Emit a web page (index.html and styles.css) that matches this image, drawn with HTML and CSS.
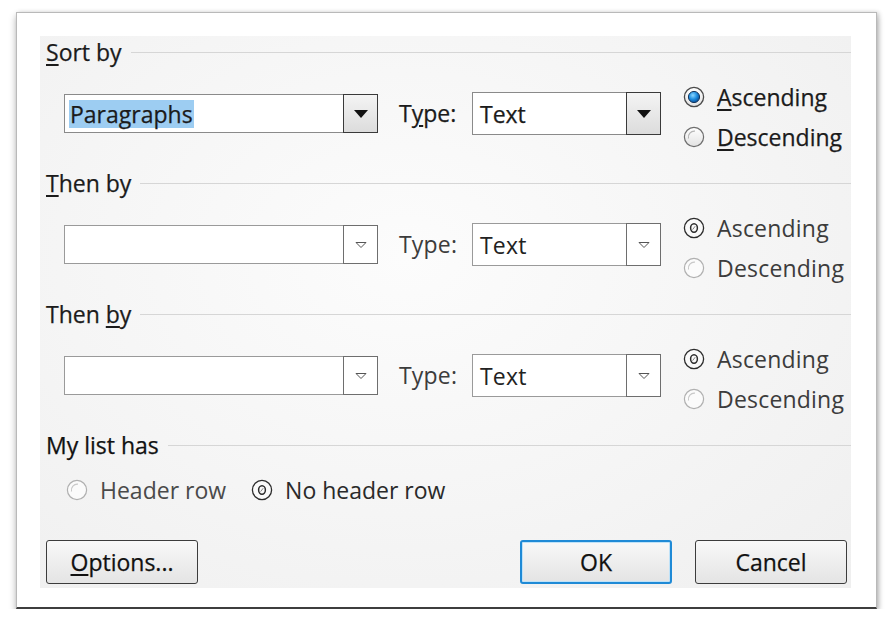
FILE: index.html
```html
<!DOCTYPE html>
<html lang="en">
<head>
<meta charset="utf-8">
<title>Sort Text</title>
<link rel="stylesheet" href="styles.css">
</head>
<body>
<div class="dialog">
  <div class="panel">
    <section class="group">
      <div class="heading"><span class="heading-text"><u>S</u>ort by</span><span class="rule"></span></div>
      <div class="row">
        <div class="combo combo-main">
          <span class="value"><span class="selected">Paragraphs</span></span>
          <span class="drop drop-active"><svg width="16" height="10" viewBox="0 0 16 10"><polygon points="1,1 15,1 8,9" fill="#111"/></svg></span>
        </div>
        <span class="type-label">T<u>y</u>pe:</span>
        <div class="combo combo-type">
          <span class="value">Text</span>
          <span class="drop drop-active"><svg width="16" height="10" viewBox="0 0 16 10"><polygon points="1,1 15,1 8,9" fill="#111"/></svg></span>
        </div>
        <div class="radios">
          <div class="radio">
            <svg class="dot" width="22" height="22" viewBox="0 0 22 22"><defs><radialGradient id="blue" cx="40%" cy="35%" r="65%"><stop offset="0" stop-color="#8ad6ff"/><stop offset="0.55" stop-color="#1f8ee0"/><stop offset="1" stop-color="#0a4f98"/></radialGradient><linearGradient id="ring" x1="0" y1="0" x2="0" y2="1"><stop offset="0" stop-color="#ffffff"/><stop offset="1" stop-color="#e2e2e2"/></linearGradient></defs><circle cx="11" cy="11" r="9.6" fill="url(#ring)" stroke="#4a4a4a" stroke-width="1.3"/><circle cx="11" cy="11" r="5.6" fill="url(#blue)" stroke="#16375e" stroke-width="1"/></svg>
            <span class="label"><u>A</u>scending</span>
          </div>
          <div class="radio">
            <svg class="dot" width="22" height="22" viewBox="0 0 22 22"><circle cx="11" cy="11" r="9.6" fill="url(#ring)" stroke="#6e6e6e" stroke-width="1.2"/><path d="M5.5 12.5 A6 6 0 0 1 12 5.2" fill="none" stroke="#b5b5b5" stroke-width="1.2"/></svg>
            <span class="label"><u>D</u>escending</span>
          </div>
        </div>
      </div>
    </section>

    <section class="group">
      <div class="heading"><span class="heading-text"><u>T</u>hen by</span><span class="rule"></span></div>
      <div class="row dim">
        <div class="combo combo-main combo-plain">
          <span class="value"></span>
          <span class="drop drop-plain"><svg width="12" height="8" viewBox="0 0 12 8"><polygon points="1,1.5 11,1.5 6,6.5" fill="none" stroke="#555" stroke-width="1"/></svg></span>
        </div>
        <span class="type-label">Type:</span>
        <div class="combo combo-type combo-plain">
          <span class="value">Text</span>
          <span class="drop drop-plain"><svg width="12" height="8" viewBox="0 0 12 8"><polygon points="1,1.5 11,1.5 6,6.5" fill="none" stroke="#555" stroke-width="1"/></svg></span>
        </div>
        <div class="radios">
          <div class="radio">
            <svg class="dot" width="22" height="22" viewBox="0 0 22 22"><circle cx="11" cy="11" r="9.6" fill="#fafafa" stroke="#2c2c2c" stroke-width="1.3"/><ellipse cx="11" cy="11" rx="3.4" ry="4.2" fill="none" stroke="#2c2c2c" stroke-width="1.5"/><path d="M9.6 12.6 L12.2 9.2" stroke="#777" stroke-width="0.9"/></svg>
            <span class="label">Ascending</span>
          </div>
          <div class="radio">
            <svg class="dot" width="22" height="22" viewBox="0 0 22 22"><circle cx="11" cy="11" r="9.6" fill="#fbfbfb" stroke="#b0b0b0" stroke-width="1.2"/><path d="M5.5 12.5 A6 6 0 0 1 12 5.2" fill="none" stroke="#c9c9c9" stroke-width="1.2"/></svg>
            <span class="label">Descending</span>
          </div>
        </div>
      </div>
    </section>

    <section class="group">
      <div class="heading"><span class="heading-text">Then <u>b</u>y</span><span class="rule"></span></div>
      <div class="row dim">
        <div class="combo combo-main combo-plain">
          <span class="value"></span>
          <span class="drop drop-plain"><svg width="12" height="8" viewBox="0 0 12 8"><polygon points="1,1.5 11,1.5 6,6.5" fill="none" stroke="#555" stroke-width="1"/></svg></span>
        </div>
        <span class="type-label">Type:</span>
        <div class="combo combo-type combo-plain">
          <span class="value">Text</span>
          <span class="drop drop-plain"><svg width="12" height="8" viewBox="0 0 12 8"><polygon points="1,1.5 11,1.5 6,6.5" fill="none" stroke="#555" stroke-width="1"/></svg></span>
        </div>
        <div class="radios">
          <div class="radio">
            <svg class="dot" width="22" height="22" viewBox="0 0 22 22"><circle cx="11" cy="11" r="9.6" fill="#fafafa" stroke="#2c2c2c" stroke-width="1.3"/><ellipse cx="11" cy="11" rx="3.4" ry="4.2" fill="none" stroke="#2c2c2c" stroke-width="1.5"/><path d="M9.6 12.6 L12.2 9.2" stroke="#777" stroke-width="0.9"/></svg>
            <span class="label">Ascending</span>
          </div>
          <div class="radio">
            <svg class="dot" width="22" height="22" viewBox="0 0 22 22"><circle cx="11" cy="11" r="9.6" fill="#fbfbfb" stroke="#b0b0b0" stroke-width="1.2"/><path d="M5.5 12.5 A6 6 0 0 1 12 5.2" fill="none" stroke="#c9c9c9" stroke-width="1.2"/></svg>
            <span class="label">Descending</span>
          </div>
        </div>
      </div>
    </section>

    <section class="group-last">
      <div class="heading"><span class="heading-text">My list has</span><span class="rule"></span></div>
      <div class="header-row">
        <div class="radio">
          <svg class="dot" width="22" height="22" viewBox="0 0 22 22"><circle cx="11" cy="11" r="9.6" fill="#fbfbfb" stroke="#b0b0b0" stroke-width="1.2"/><path d="M5.5 12.5 A6 6 0 0 1 12 5.2" fill="none" stroke="#c9c9c9" stroke-width="1.2"/></svg>
          <span class="label">Header row</span>
        </div>
        <div class="radio radio-second">
          <svg class="dot" width="22" height="22" viewBox="0 0 22 22"><circle cx="11" cy="11" r="9.6" fill="#fafafa" stroke="#2c2c2c" stroke-width="1.3"/><ellipse cx="11" cy="11" rx="3.4" ry="4.2" fill="none" stroke="#2c2c2c" stroke-width="1.5"/><path d="M9.6 12.6 L12.2 9.2" stroke="#777" stroke-width="0.9"/></svg>
          <span class="label label-dark">No header row</span>
        </div>
      </div>
    </section>

    <div class="buttons">
      <button class="btn"><u>O</u>ptions...</button>
      <span class="spacer"></span>
      <button class="btn btn-default">OK</button>
      <button class="btn btn-cancel">Cancel</button>
    </div>
  </div>
</div>
</body>
</html>
```

FILE: styles.css
```css
html, body {
  margin: 0;
  padding: 0;
  background: #ffffff;
}

body {
  font-family: "Open Sans", "Noto Sans", "DejaVu Sans", sans-serif;
  font-size: 23px;
  color: #1b1b1b;
  -webkit-text-stroke: 0.25px currentColor;
}

u {
  text-decoration: underline;
  text-decoration-thickness: 2px;
  text-underline-offset: 3px;
}

.dialog {
  margin: 12px 0 0 16px;
  width: 813px;
  height: 553px;
  padding: 23px 23px 18px 23px;
  background: #ffffff;
  border: 1px solid #b9b9b9;
  border-bottom: 2px solid #3e3e3e;
  box-shadow: 0 4px 7px rgba(0, 0, 0, 0.3), 2px 0 4px rgba(0, 0, 0, 0.14);
}

.panel {
  width: 811px;
  height: 552px;
  background: radial-gradient(ellipse at 45% 40%, #fcfcfc 0%, #f5f5f5 55%, #efefef 100%);
  display: flex;
  flex-direction: column;
}

.heading {
  height: 32px;
  display: flex;
  align-items: center;
  padding-left: 6px;
}

.heading-text {
  line-height: 32px;
  white-space: nowrap;
}

.rule {
  flex: 1;
  height: 0;
  border-top: 1px solid #d6d6d6;
  margin-left: 9px;
}

.row {
  height: 99px;
  display: flex;
  align-items: flex-start;
  padding-left: 24px;
}

.combo {
  display: flex;
  background: #ffffff;
  border: 1px solid #8a8a8a;
  box-sizing: border-box;
}

.combo-main {
  width: 314px;
  height: 39px;
  margin-top: 26px;
}

.combo-type {
  width: 189px;
  height: 43px;
  margin-top: 24px;
}

.value {
  flex: 1;
  display: flex;
  align-items: center;
  padding-left: 4px;
  white-space: nowrap;
}

.combo-type .value {
  padding-left: 7px;
}

.selected {
  background: #9dcdf2;
  padding: 0 1px;
  line-height: 28px;
}

.drop {
  width: 35px;
  display: flex;
  align-items: center;
  justify-content: center;
  box-sizing: border-box;
}

.drop-active {
  margin: -1px -1px -1px 0;
  border: 1.5px solid #3a3a3a;
  background: linear-gradient(#f4f4f4, #dcdcdc);
}

.drop-plain {
  margin: -1px -1px -1px 0;
  border: 1px solid #6e6e6e;
  background: #ffffff;
}

.type-label {
  width: 73px;
  margin-left: 21px;
  margin-top: 26px;
  line-height: 39px;
  white-space: nowrap;
}

.radios {
  margin-left: 22px;
  margin-top: 9px;
  display: flex;
  flex-direction: column;
}

.radio {
  height: 40px;
  display: flex;
  align-items: center;
  white-space: nowrap;
}

.dot {
  flex: none;
}

.radio .label {
  margin-left: 12px;
}

.dim {
  color: #3c3c3c;
  -webkit-text-stroke: 0;
  letter-spacing: 0.2px;
}

.dim .combo {
  border-color: #9a9a9a;
}

.dim .combo-type .value {
  color: #222;
}

.group-last .heading-text {
  color: #111;
}

.header-row {
  height: 58px;
  display: flex;
  align-items: center;
  padding-left: 26px;
  color: #4a4a4a;
  -webkit-text-stroke: 0;
}

.radio-second {
  margin-left: 25px;
}

.label-dark {
  color: #2a2a2a;
}

.buttons {
  display: flex;
  margin-top: 21px;
  padding: 0 4px 0 6px;
}

.spacer {
  flex: 1;
}

.btn {
  width: 152px;
  height: 44px;
  font-family: inherit;
  font-size: 23px;
  color: #111;
  -webkit-text-stroke: 0.25px currentColor;
  background: linear-gradient(#f8f8f8, #e4e4e4);
  border: 1.5px solid #3c3c3c;
  border-radius: 3px;
  padding: 0;
}

.btn-default {
  border: 2px solid #1f8ad6;
  box-shadow: inset 0 0 0 1px #bfe2f8;
}

.btn-cancel {
  margin-left: 23px;
}
```
